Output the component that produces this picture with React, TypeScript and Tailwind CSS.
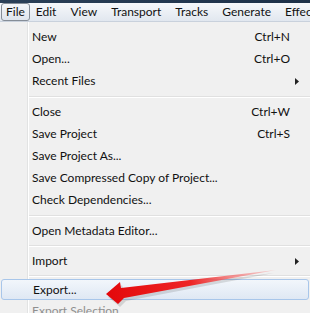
import React from 'react';

type Item =
  | { kind: 'item'; label: string; shortcut?: string; submenu?: boolean; active?: boolean; disabled?: boolean }
  | { kind: 'sep'; h: number };

const items: Item[] = [
  { kind: 'item', label: 'New', shortcut: 'Ctrl+N' },
  { kind: 'item', label: 'Open...', shortcut: 'Ctrl+O' },
  { kind: 'item', label: 'Recent Files', submenu: true },
  { kind: 'sep', h: 9 },
  { kind: 'item', label: 'Close', shortcut: 'Ctrl+W' },
  { kind: 'item', label: 'Save Project', shortcut: 'Ctrl+S' },
  { kind: 'item', label: 'Save Project As...' },
  { kind: 'item', label: 'Save Compressed Copy of Project...' },
  { kind: 'item', label: 'Check Dependencies...' },
  { kind: 'sep', h: 9 },
  { kind: 'item', label: 'Open Metadata Editor...' },
  { kind: 'sep', h: 8 },
  { kind: 'item', label: 'Import', submenu: true },
  { kind: 'sep', h: 7 },
  { kind: 'item', label: 'Export...', active: true },
  { kind: 'item', label: 'Export Selection', disabled: true },
];

const menus = ['Edit', 'View', 'Transport', 'Tracks', 'Generate', 'Effect'];

function SubmenuArrow() {
  return (
    <svg width="4" height="7" viewBox="0 0 4 7" className="shrink-0">
      <path d="M0 0 L4 3.5 L0 7 Z" fill="#222" />
    </svg>
  );
}

function MenuRow({ item }: { item: Item }) {
  if (item.kind === 'sep') {
    return (
      <div className={`flex items-center pl-[29px] ${item.h === 9 ? 'h-[9px]' : item.h === 8 ? 'h-[8px]' : 'h-[7px]'}`}>
        <div className="w-full border-t border-b border-t-[#e0e0e0] border-b-white" />
      </div>
    );
  }

  const rowClass = item.active
    ? 'mx-[1px] h-[21px] rounded-[3px] border border-[#a8c6ea] bg-gradient-to-b from-[#f2f6fb] to-[#dfe8f4] pl-[31px] pr-[10px]'
    : 'h-[22px] pl-[32px] pr-[20px]';

  return (
    <div className={`flex items-center justify-between ${rowClass}`}>
      <span className={item.disabled ? 'text-[#8f8f8f]' : 'text-[#111]'}>{item.label}</span>
      {item.shortcut && <span className="text-[#111]">{item.shortcut}</span>}
      {item.submenu && (
        <span className="-mr-[9px]">
          <SubmenuArrow />
        </span>
      )}
    </div>
  );
}

function RedArrow() {
  return (
    <svg
      width="310"
      height="313"
      viewBox="0 0 310 313"
      className="pointer-events-none absolute left-0 top-0"
    >
      <defs>
        <linearGradient id="arrowFill" x1="106" y1="294" x2="276" y2="270" gradientUnits="userSpaceOnUse">
          <stop offset="0" stopColor="#e3070b" />
          <stop offset="0.5" stopColor="#ee2626" />
          <stop offset="1" stopColor="#f6b0b0" stopOpacity="0.5" />
        </linearGradient>
      </defs>
      <polygon
        points="108,297 122,285 124,291 274,273 126,301 120,307"
        fill="#000"
        opacity="0.12"
      />
      <polygon
        points="106,294 120,282 121,288 276,270 124,298 118,304"
        fill="url(#arrowFill)"
      />
    </svg>
  );
}

export default function App() {
  return (
    <div
      className="relative h-[313px] w-[310px] overflow-hidden bg-[#f0f0f0] text-[12px] leading-none"
      style={{ fontFamily: 'Lato, "Noto Sans", sans-serif' }}
    >
      <div className="h-[3px] bg-gradient-to-r from-[#2b4058] to-[#1d3149]" />
      <div className="flex h-[19px] items-center border-b border-[#c9d1dc] bg-gradient-to-b from-[#f6f8fb] to-[#e1e7ef]">
        <div className="ml-[1px] flex h-[18px] items-center rounded-[3px] border border-[#858d97] bg-gradient-to-b from-[#f4f6f9] to-[#dfe5ed] px-[4px] text-[#111]">
          File
        </div>
        <div className="flex items-center text-[#111]">
          {menus.map((m) => (
            <span key={m} className="px-[7px] first:pl-[6px]">
              {m}
            </span>
          ))}
        </div>
      </div>

      <div className="relative flex flex-col pt-[4px]">
        <div className="absolute bottom-0 left-[27px] top-0 w-[2px] border-l border-r border-l-[#e2e3e3] border-r-white" />
        <div className="relative flex flex-col">
          {items.map((item, i) => (
            <MenuRow key={i} item={item} />
          ))}
        </div>
      </div>

      <RedArrow />
    </div>
  );
}
